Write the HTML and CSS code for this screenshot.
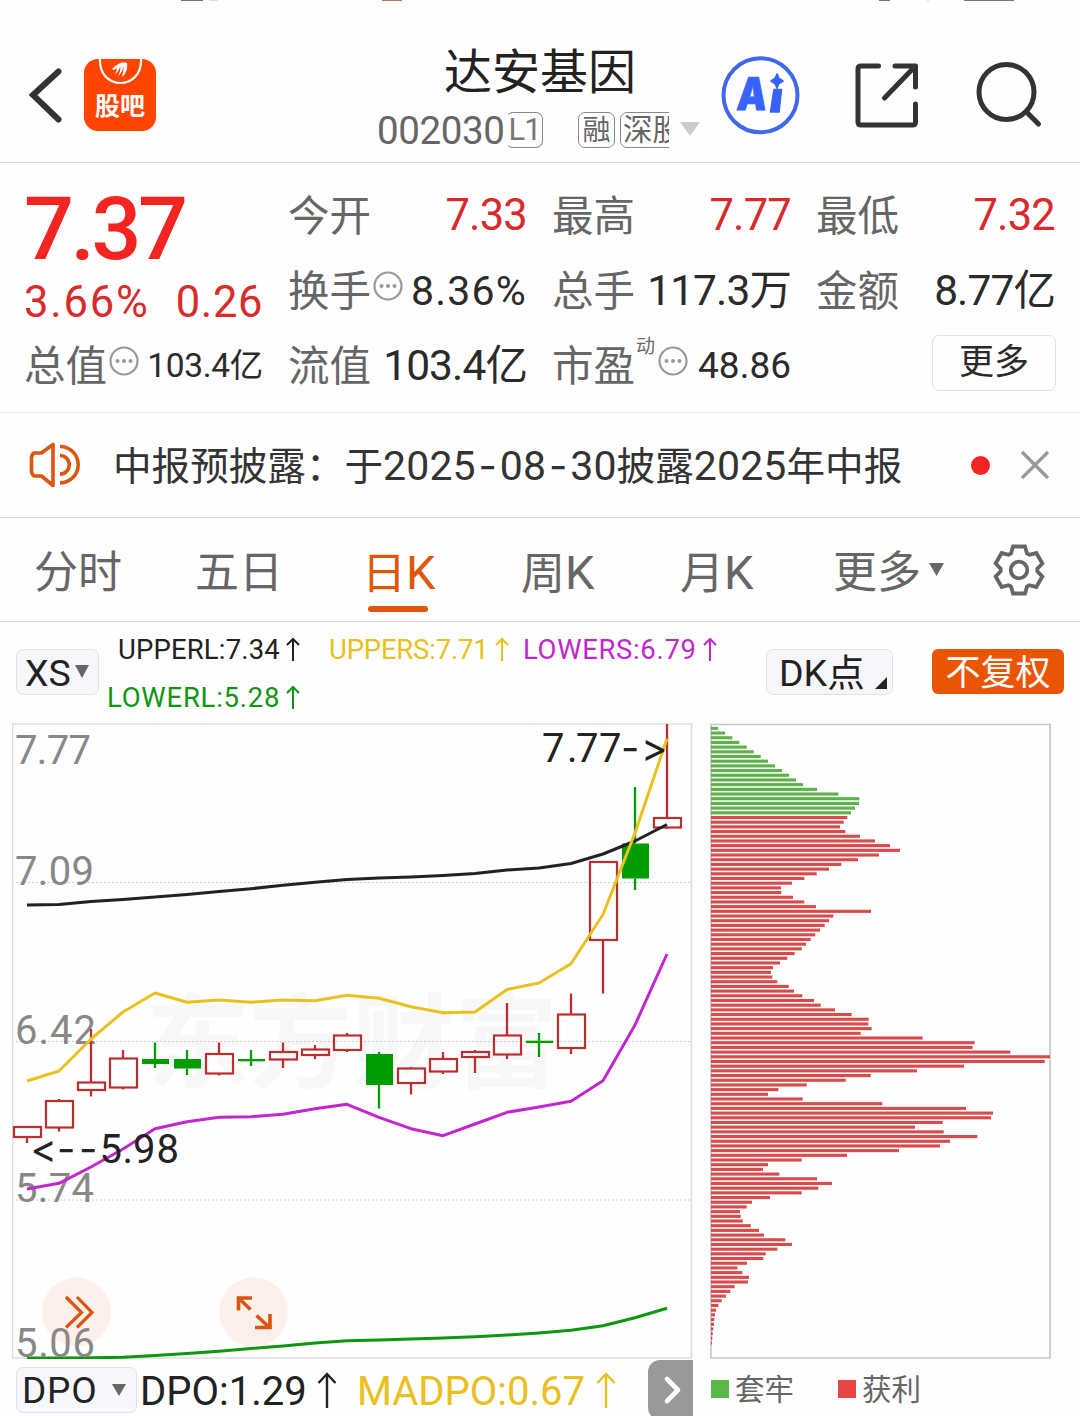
FILE: index.html
```html
<!DOCTYPE html>
<html lang="zh-CN">
<head>
<meta charset="utf-8">
<title>达安基因 002030</title>
<link rel="stylesheet" href="styles.css">
</head>
<body>
<div class="app">
  <svg class="status" viewBox="0 0 1080 2" width="1080" height="2">
    <path fill="#777" d="M181 0h22v1h-22zM879 0h11v1h-11zM964 0h50v1h-50z"/>
    <path fill="#ddd" d="M209 0h9v1h-9zM927 0h2v1h-2z"/>
    <path fill="#b8716b" d="M382 0h20v1h-20z"/>
  </svg>

  <header class="header">
    <svg class="back" viewBox="0 0 36 60" width="36" height="60"><path d="M30.500 6.500 5 30l25.500 24.500" fill="none" stroke="#333" stroke-width="6" stroke-linecap="round" stroke-linejoin="miter" transform="translate(-1 -1)"/></svg>
    <div class="guba">
      <svg viewBox="0 0 72 30" width="72" height="30">
        <path d="M16 -1C15 15 25 24 36.500 24S58 15 57 -1" fill="none" stroke="#fff" stroke-width="2.200"/>
        <path d="M28 10C34 4 39 2 43 4C44 9 42 15 38 18C39 13 40 9 39 7C39 11 37 15 34 17C36 13 37 10 36 8C35 11 33 14 31 15C32 13 33 11 33 9C31 11 29 11 28 10Z" fill="#fff"/>
      </svg>
      <span class="guba-text">股吧</span>
    </div>
    <div class="heading">
      <h1 class="name">达安基因</h1>
      <div class="sub">
        <span class="code">002030</span><span class="tag tag-l1">L1</span>
        <span class="tag tag-rong">融</span><span class="tag-clip"><span class="tag tag-shen">深股</span></span>
        <svg class="caret" viewBox="0 0 20 14" width="20" height="14"><path d="M0 0h20L10 14z" fill="#ccc"/></svg>
      </div>
    </div>
    <svg class="ai" viewBox="720 54 82 82" width="82" height="82">
      <circle cx="760.500" cy="95.300" r="37" fill="none" stroke="#3f68ea" stroke-width="4"/>
      <text class="ai-text" transform="translate(736 110) skewX(-5) scale(.83 1)">A</text>
      <path d="M774 89.500h7.500l-2.500 22.500h-8.500zM777 74l2 4.500 4 2.500-4 2.500-2 4.500-2-4.500-4-2.500 4-2.500z" fill="#3763fb" stroke="#3763fb" stroke-width="1.600" stroke-linejoin="round"/>
    </svg>
    <svg class="share" viewBox="854 62 66 66" width="66" height="66"><path d="M878.500 66H861q-3 0-3 3v53q0 3 3 3h51.500q3 0 3-3v-18M895 66h20.500v21M884.500 98l30-31" fill="none" stroke="#333" stroke-width="5" stroke-linecap="round" stroke-linejoin="round"/></svg>
    <svg class="search" viewBox="974 60 70 70" width="70" height="70"><g fill="none" stroke="#333" stroke-width="5" stroke-linecap="round"><circle cx="1006.500" cy="92" r="27.500"/><path d="M1026.500 112l12 12"/></g></svg>
  </header>

  <section class="quote">
    <div class="price-box">
      <div class="price">7.37</div>
      <div class="change"><span class="pct">3.66%</span><span class="diff">0.26</span></div>
    </div>
    <div class="cell"><span class="label">今开</span><span class="value up">7.33</span></div>
    <div class="cell"><span class="label">最高</span><span class="value up">7.77</span></div>
    <div class="cell"><span class="label">最低</span><span class="value up">7.32</span></div>
    <div class="cell"><span class="label">换手</span><svg class="more-dot" viewBox="0 0 30 30" width="30" height="30"><use href="#dots"/></svg><span class="value v-pct">8.36%</span></div>
    <div class="cell"><span class="label">总手</span><span class="value v-unit">117.3万</span></div>
    <div class="cell"><span class="label">金额</span><span class="value v-unit">8.77亿</span></div>
    <div class="cell"><span class="label">总值</span><svg class="more-dot" viewBox="0 0 30 30" width="30" height="30"><use href="#dots"/></svg><span class="value v-small">103.4亿</span></div>
    <div class="cell"><span class="label">流值</span><span class="value v-unit">103.4亿</span></div>
    <div class="cell"><span class="label">市盈</span><span class="sup">动</span><svg class="more-dot dot-pe" viewBox="0 0 30 30" width="30" height="30"><g id="dots"><circle cx="15" cy="15" r="13.500" fill="none" stroke="#999" stroke-width="2.200"/><g fill="#999"><circle cx="8.500" cy="15" r="2"/><circle cx="15" cy="15" r="2"/><circle cx="21.500" cy="15" r="2"/></g></g></svg><span class="value v-pe">48.86</span></div>
    <div class="cell cell-end"><button class="more">更多</button></div>
  </section>

  <section class="notice">
    <svg class="speaker" viewBox="28 441 54 48" width="54" height="48"><g fill="none" stroke="#d9570f" stroke-width="3.600"><path d="M53 444.500v41L41.500 476H34q-2.500-2-2.500-5v-13q0-3 2.500-5h7.500z" stroke-linejoin="round"/><path d="M60 446.500a18.200 18.200 0 0 1 0 36.400M60 455.500a9.300 9.300 0 0 1 0 18.600"/></g></svg>
    <div class="notice-text">中报预披露：于<span class="num">2025<i class="dash">-</i>08<i class="dash">-</i>30</span>披露<span class="num">2025</span>年中报</div>
    <span class="dot"></span>
    <svg class="close" viewBox="0 0 30 30" width="30" height="30"><path d="M2 2l26 26M28 2 2 28" stroke="#999" stroke-width="3.200"/></svg>
  </section>

  <nav class="tabs">
    <span class="tab t1">分时</span>
    <span class="tab t2">五日</span>
    <span class="tab t3 active">日<b class="k">K</b></span>
    <span class="tab t4">周<b class="k">K</b></span>
    <span class="tab t5">月<b class="k">K</b></span>
    <span class="tab t6">更多</span>
    <svg class="tab-caret" viewBox="0 0 15 13" width="15" height="13"><path d="M0 0h15L7.500 13z" fill="#666"/></svg>
    <svg class="gear" viewBox="-27 -27 54 54" width="54" height="54"><g fill="none" stroke="#666" stroke-width="3.800"><path stroke-linejoin="miter" d="M-8-16.500-6-23.500H6L8-16.500 10.300-15.200 17.350-16.950 23.350-6.550 18.300-1.300V1.300L23.350 6.550 17.350 16.950 10.300 15.200 8 16.500 6 23.500H-6L-8 16.500-10.300 15.200-17.350 16.950-23.350 6.550-18.300 1.300V-1.300L-23.350-6.550-17.350-16.950-10.300-15.200z"/><circle r="8.300"/></g></svg>
  </nav>

  <section class="tools">
    <button class="select xs">XS<svg viewBox="0 0 14 13" width="14" height="13"><path d="M0 0h14L7 13z" fill="#666"/></svg></button>
    <div class="readout">
      <div class="line line1">
        <span class="r-black">UPPERL:7.34</span><svg class="arrow a1" viewBox="0 0 14 24" width="14" height="24"><use href="#up"/></svg>
        <span class="r-yellow">UPPERS:7.71</span><svg class="arrow a2" viewBox="0 0 14 24" width="14" height="24"><use href="#up"/></svg>
        <span class="r-magenta">LOWERS:6.79</span><svg class="arrow a3" viewBox="0 0 14 24" width="14" height="24"><use href="#up"/></svg>
      </div>
      <div class="line">
        <span class="r-green">LOWERL:5.28</span><svg class="arrow a4" viewBox="0 0 14 24" width="14" height="24"><path id="up" d="M7 24V2M1 8l6-6 6 6" fill="none" stroke="currentColor" stroke-width="2"/></svg>
      </div>
    </div>
    <button class="select dk"><span class="dk-text">DK点</span><svg viewBox="0 0 12 12" width="12" height="12"><path d="M12 0v12H0z" fill="#222"/></svg></button>
    <button class="adjust">不复权</button>
  </section>

  <section class="charts">
    <svg class="kline" viewBox="12 723 682 636" width="682" height="636">
      <text class="watermark" x="146" y="1080" textLength="412">东方财富</text>
      <path d="M12 882.500H692M12 1041.500H692M12 1200H692" stroke="#ccc" stroke-width="1" stroke-dasharray="2 2"/>
      <path d="M12.500 724H691.500V1358H12.500z" fill="none" stroke="#dedede" stroke-width="1.600"/>
      <g class="axis">
        <text x="15" y="763.500" textLength="76">7.77</text>
        <text x="15" y="884.500" textLength="79">7.09</text>
        <text x="15" y="1043.500" textLength="81">6.42</text>
        <text x="15" y="1201.500" textLength="79">5.74</text>
      </g>
      <g id="candles"></g>
      <g id="lines" fill="none" stroke-width="3" stroke-linejoin="round"></g>
      <g class="mark">
        <text y="761.500" x="542 567 576 599 621 641">7.77<tspan class="hy">-&gt;</tspan></text>
        <text y="1163" x="30.500 57 79 99.500 122.500 133 156.500"><tspan class="hy">&lt;--</tspan>5.98</text>
      </g>
      <g fill="#fdeee7" fill-opacity=".92"><circle cx="76.500" cy="1312" r="34.500"/><circle cx="253.500" cy="1312" r="34.500"/></g>
      <g fill="none" stroke="#d8560f" stroke-width="3.200">
        <path d="M66 1297l15.500 15.500L66 1327.500M77 1297l15 15.500L77 1327.500"/>
        <path stroke-width="3.600" d="M238.500 1310.500V1298H252M239 1298.500l11.500 11M270 1314v13.500H255M256.500 1315.500l13 12"/>
      </g>
      <text class="axis" x="15" y="1356.500" textLength="80">5.06</text>
    </svg>
    <svg class="chips" viewBox="709 723 343 636" width="343" height="636">
      <path d="M711 724.500H1050V1358H711z" fill="none" stroke="#c9c9c9" stroke-width="1.700"/>
      <g id="chips"></g>
    </svg>
  </section>

  <footer class="bottom">
    <button class="select dpo">DPO<svg viewBox="0 0 14 12" width="14" height="12"><path d="M0 0h14L7 12z" fill="#666"/></svg></button>
    <span class="d-black">DPO:1.29</span><svg class="big-arrow b1" viewBox="0 0 20 36" width="20" height="36"><use href="#bigup"/></svg>
    <span class="d-yellow">MADPO:0.67</span><svg class="big-arrow b2" viewBox="0 0 20 36" width="20" height="36"><path id="bigup" d="M10 36V2M1.500 11 10 2l8.500 9" fill="none" stroke="currentColor" stroke-width="2.400"/></svg>
    <button class="next"><svg viewBox="0 0 20 30" width="20" height="30"><path d="M4 4l11 11L4 26" fill="none" stroke="#fff" stroke-width="4.600" stroke-linecap="round" stroke-linejoin="round"/></svg></button>
    <span class="legend"><i class="sq green"></i><span class="legend-text">套牢</span></span>
    <span class="legend"><i class="sq red"></i><span class="legend-text">获利</span></span>
  </footer>
</div>
<script src="chart.js"></script>
</body>
</html>
```

FILE: styles.css
```css
* { box-sizing: border-box; }
body {
  margin: 0;
  background: #fefefe;
  color: #2b2b2b;
  font-family: Roboto, "Noto Sans CJK SC", sans-serif;
}
h1, button { margin: 0; padding: 0; font: inherit; color: inherit; }
button { border: 0; background: none; }
svg { display: block; flex: none; }
i { font-style: normal; }
.app { width: 1080px; height: 1416px; overflow: hidden; }
.status { height: 2px; }

.header { display: flex; height: 161px; border-bottom: 1px solid #d4d4d4; }
.back { margin: 64px 0 0 29px; }
.guba { width: 72px; height: 72px; margin: 57px 0 0 19px; border-radius: 14px; background: #ff4400; overflow: hidden; }
.guba-text { display: block; margin-top: 3px; line-height: 30px; text-align: center; font-size: 25px; font-weight: 700; color: #fff; }
.heading { width: 344px; margin: 41px 0 0 220px; white-space: nowrap; }
.name { margin-left: 68px; font-size: 48px; font-weight: 400; line-height: 60px; color: #222; }
.sub { display: flex; align-items: center; height: 54px; color: #666; }
.code { width: 130px; padding-left: 1px; font-size: 38.500px; letter-spacing: -.4px; color: #666; }
.tag { display: block; height: 36px; border: 1.500px solid #888; border-radius: 7px; font-size: 28px; line-height: 34px; text-align: center; flex: none; }
.tag-l1 { width: 37px; font-size: 31px; letter-spacing: -1px; border-left-color: transparent; color: #777; }
.tag-rong { width: 37px; margin-left: 35px; line-height: 36px; }
.tag-clip { width: 49px; margin-left: 5px; overflow: hidden; }
.tag-shen { width: 100px; padding-left: 2px; text-align: left; font-size: 29.500px; line-height: 35px; }
.caret { margin: -2px 0 0 11px; }
.ai { margin: 52px 0 0; }
.ai-text { font: 900 45px Inter, sans-serif; fill: #3763fb; stroke: #3763fb; stroke-width: 1px; }
.share { margin: 60px 0 0 52px; }
.search { margin: 58px 0 0 54px; }

.quote {
  display: grid;
  grid-template-columns: repeat(4, 238px);
  grid-template-rows: 75px 75px 75px;
  column-gap: 26px;
  height: 250px;
  padding: 15px 25px 0;
  border-bottom: 1px solid #ebebeb;
  white-space: nowrap;
}
.price-box { grid-row: span 2; padding-top: 14px; }
.price { height: 74px; margin-left: -1px; font-size: 88px; font-weight: 500; line-height: 74px; letter-spacing: -3.500px; color: #f32522; }
.change { display: flex; justify-content: space-between; font-size: 43.500px; line-height: 74px; color: #d92b2b; }
.pct { letter-spacing: 1.800px; margin-left: -1px; }
.diff { letter-spacing: .6px; }
.cell { display: flex; align-items: center; height: 75px; }
.cell-end { justify-content: flex-end; }
.label { width: 84px; margin: -5px 0 0 -1px; font-size: 41.500px; color: #666; }
.value { margin-left: auto; }
.up { font-size: 43.500px; letter-spacing: -.8px; color: #d92b2b; }
.v-pct { font-size: 41px; letter-spacing: 1.200px; }
.v-unit { margin-top: -8px; font-size: 42.500px; letter-spacing: -.9px; }
.v-small { margin-top: -6px; font-size: 33.500px; letter-spacing: -.3px; }
.v-pe { font-size: 37px; }
.more-dot { margin-top: -9px; margin-left: 1px; }
.dot-pe { margin-left: 2px; }
.sup { width: 20px; margin-top: -42px; font-size: 19px; color: #666; }
.more { width: 124px; height: 56px; margin: -5px -1px 0 0; border: 1.500px solid #e2e2e2; border-radius: 7px; font-size: 35px; line-height: 54px; }

.notice { display: flex; align-items: center; height: 105px; border-bottom: 1px solid #d4d4d4; color: #333; }
.speaker { margin-left: 28px; }
.notice-text { width: 858px; margin: -5px 0 0 31px; font-size: 38.600px; white-space: nowrap; }
.num { font-size: 41px; letter-spacing: .15px; }
.dash { display: inline-block; width: 24px; text-align: center; font-family: Inter, sans-serif; font-size: 40px; }
.dot { width: 19px; height: 19px; border-radius: 50%; background: #f32522; }
.close { margin-left: 30px; }

.tabs { display: flex; align-items: center; height: 104px; border-bottom: 1px solid #d4d4d4; color: #666; }
.tab { position: relative; width: 90px; height: 80px; font-size: 44px; line-height: 86px; white-space: nowrap; }
.k { font-size: 47px; font-weight: 400; }
.t1 { margin-left: 34px; }
.t2 { margin-left: 71px; }
.t3 { width: 70px; margin-left: 77px; }
.t4 { width: 80px; margin-left: 89px; }
.t5 { width: 80px; margin-left: 79px; }
.t6 { margin-left: 73px; }
.active { color: #e0560b; }
.active::after { content: ""; position: absolute; left: 6px; top: 76px; width: 60px; height: 6px; border-radius: 3px; background: #e0560b; }
.tab-caret { margin-left: 6px; }
.gear { margin-left: 48px; }

.tools { display: flex; height: 101px; }
.select { display: flex; align-items: center; height: 46px; border: 1.500px solid #e0e2e6; border-radius: 7px; background: #f6f7fa; color: #222; font-size: 37.500px; white-space: nowrap; }
.xs { width: 83px; margin: 27px 0 0 16px; padding: 2px 0 0 8px; }
.xs svg { margin: -3px 0 0 4px; }
.readout { width: 659px; margin-left: 8px; padding-top: 3px; font-size: 27.500px; }
.line { display: flex; align-items: center; height: 48px; white-space: nowrap; }
.line1 { padding-left: 11px; }
.r-black, .a1 { color: #222; }
.r-yellow, .a2 { color: #eac01e; }
.r-magenta, .a3 { color: #c226cf; }
.r-green, .a4 { color: #0f960f; }
.r-black { width: 168px; letter-spacing: .15px; }
.r-yellow { width: 166px; letter-spacing: -.2px; }
.r-magenta { width: 180px; letter-spacing: .65px; }
.r-green { width: 179px; letter-spacing: .75px; }
.a1 { margin-right: 29px; }
.a2 { margin-right: 14px; }
.dk { width: 127px; margin-top: 27px; padding-left: 12px; }
.dk-text { margin-top: -5px; }
.dk svg { margin: 22px 0 0 10px; }
.adjust { width: 132px; height: 45px; margin: 27px 0 0 39px; padding-top: 1px; border-radius: 6px; background: #ea5504; color: #fff; font-size: 35px; line-height: 48px; }

.charts { display: flex; height: 636px; padding-left: 12px; }
.chips { margin-left: 15px; }
.axis { font-size: 40px; fill: #888; }
.mark { font-size: 40px; fill: #222; }
.hy { font-family: Inter, sans-serif; }
.watermark { font: 700 103px "Noto Sans CJK SC", sans-serif; fill: #f7f7f7; }

.bottom { display: flex; height: 57px; white-space: nowrap; }
.dpo { width: 121px; margin: 8px 0 0 16px; padding-left: 5px; font-size: 37px; letter-spacing: .8px; }
.dpo svg { margin-left: 15px; }
.d-black, .d-yellow { font-size: 40px; line-height: 65px; }
.d-black { width: 177px; margin-left: 3px; color: #222; }
.d-yellow { width: 240px; margin-left: 20px; color: #eac01e; }
.big-arrow { margin-top: 13px; }
.b1 { color: #222; }
.b2 { color: #eac01e; margin-left: -1px; }
.next { display: flex; width: 45px; height: 60px; margin: 1px 18px 0 32px; padding-left: 15px; align-items: center; border-radius: 12px 0 0 12px; background: #999; }
.legend { display: flex; align-items: center; width: 127px; height: 60px; font-size: 29.500px; color: #666; }
.legend-text { margin-top: -5px; }
.sq { width: 18px; height: 18px; margin-right: 6px; }
.green { background: #58b947; }
.red { background: #e84747; }
```

FILE: chart.js
```js
const NS = "http://www.w3.org/2000/svg";
function add(parent, tag, attrs) {
  const el = document.createElementNS(NS, tag);
  for (const key in attrs) el.setAttribute(key, attrs[key]);
  parent.appendChild(el);
}

const STEP = 32;
const FIRST = 27;

// [rising, high, body top, body bottom, low]
const candles = [
  [1, 1127, 1127, 1137, 1143], [1, 1099, 1101, 1127.5, 1131.5], [1, 1029, 1082.5, 1090, 1096.5],
  [1, 1050, 1058.5, 1087.5, 1089.5], [0, 1042.5, 1059, 1064, 1068], [0, 1050, 1059, 1068.5, 1075],
  [1, 1042.5, 1054, 1073.5, 1075.5], [0, 1050, 1059, 1061.3, 1066], [1, 1042.5, 1052, 1059.5, 1068],
  [1, 1045, 1049.5, 1055, 1059], [1, 1033, 1035.5, 1050, 1052], [0, 1052, 1054, 1085, 1108.5],
  [1, 1067, 1068.5, 1083, 1094.5], [1, 1052, 1059, 1071.5, 1074], [1, 1050, 1052, 1057, 1073],
  [1, 1003, 1035.5, 1054.5, 1059], [0, 1033, 1040.7, 1043, 1057], [1, 993.5, 1014.5, 1048, 1054],
  [1, 861, 862, 940, 993.5], [0, 787, 843.5, 878.5, 890], [1, 724, 818, 827.5, 829]
];
const candleLayer = document.getElementById("candles");
candles.forEach(([up, high, top, bottom, low], i) => {
  const x = FIRST + i * STEP;
  const color = up ? "#bd2e2e" : "#009c00";
  add(candleLayer, "path", { d: `M${x} ${high}V${top}M${x} ${bottom}V${low}`, stroke: color, "stroke-width": 2.3 });
  add(candleLayer, "rect", up
    ? { x: x - 13, y: top, width: 27, height: bottom - top, fill: "none", stroke: color, "stroke-width": 2.2 }
    : { x: x - 13, y: top, width: 27, height: bottom - top, fill: color });
});

const lines = {
  "#222": [905, 904.5, 901.5, 899.5, 897, 894.5, 891.5, 888.7, 885.3, 882.3, 879.5, 878, 877, 875.5, 873.5, 870, 868, 863.5, 854, 841, 824.5],
  "#eac01e": [1081, 1071, 1039, 1012, 993, 1002.3, 1000, 1002.3, 1000, 1000.7, 995.3, 998.3, 1006.7, 1012.7, 1012, 989.5, 983, 963.7, 914.5, 833, 738.7],
  "#c226cf": [1189, 1183.3, 1167, 1149, 1128.7, 1121.7, 1117.3, 1116.7, 1114.3, 1108.7, 1104.3, 1117.3, 1128.7, 1135.7, 1124, 1112.3, 1107, 1101.3, 1080.7, 1025, 954],
  "#0f960f": [1358, 1358, 1357.8, 1357.3, 1355.5, 1353.5, 1351.3, 1348.5, 1346, 1343, 1340.7, 1340, 1339, 1338, 1336.7, 1335, 1333, 1330.3, 1325.7, 1317.7, 1308.3]
};
const lineLayer = document.getElementById("lines");
for (const color in lines) {
  const points = lines[color].map((y, i) => `${FIRST + i * STEP},${y}`).join(" ");
  add(lineLayer, "polyline", { points, stroke: color });
}

// Cost distribution by price level, in thirds of a pixel; the first 19 levels are above the close
const levels = [
  21, 42, 64, 85, 107, 128, 149, 171, 192, 213, 234, 255, 276, 318, 382, 445, 444, 432, 420,
  409, 398, 387, 403, 447, 492, 537, 567, 504, 441, 391, 354, 317, 280, 243, 210, 211, 246, 280, 315, 480,
  367, 354, 341, 327, 313, 299, 285, 272, 251, 229, 207, 186, 180, 184, 199, 233, 249, 274, 309, 329,
  372, 422, 473, 472, 482, 449, 635, 791, 785, 898, 1017, 1001, 759, 618, 479, 404, 287, 202, 171, 275,
  514, 765, 846, 840, 695, 612, 698, 799, 717, 687, 564, 408, 272, 171, 156, 205, 318, 363, 322, 272,
  177, 123, 107, 87, 89, 95, 119, 144, 159, 223, 243, 199, 164, 157, 108, 79, 94, 114, 111, 71,
  58, 45, 32, 22, 15, 12, 10, 9, 7, 5, 4, 3
];
const chipLayer = document.getElementById("chips");
levels.forEach((length, i) => {
  add(chipLayer, "rect", {
    x: 711, y: (726.8 + i * 4.692).toFixed(2), width: (length / 3).toFixed(1), height: 3.1,
    fill: i < 19 ? "#5db247" : "#da4a4a"
  });
});
```
